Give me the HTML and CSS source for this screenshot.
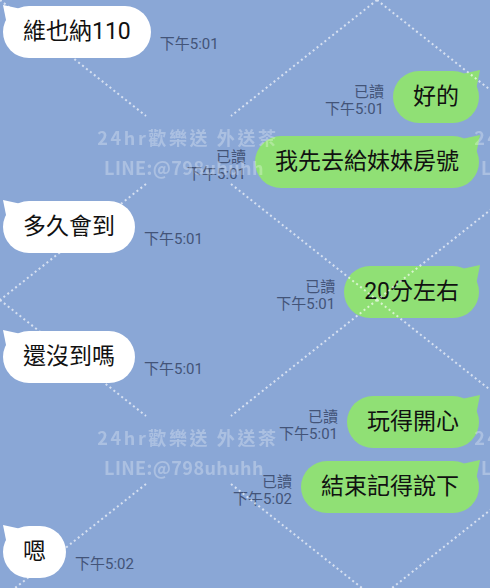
FILE: index.html
```html
<!DOCTYPE html>
<html lang="zh-Hant">
  <head>
    <meta charset="UTF-8" />
    <meta name="viewport" content="width=device-width, initial-scale=1.0" />
    <title>聊天</title>
    <link rel="stylesheet" href="styles.css">
  </head>
  <body>
    <div class="chat">
      <div class="row them">
        <div class="bubble">維也納110</div>
        <div class="meta"><span>下午5:01</span></div>
      </div>
      <div class="row me">
        <div class="meta"><span>已讀</span><span>下午5:01</span></div>
        <div class="bubble">好的</div>
      </div>
      <div class="row me">
        <div class="meta"><span>已讀</span><span>下午5:01</span></div>
        <div class="bubble">我先去給妹妹房號</div>
      </div>
      <div class="row them">
        <div class="bubble">多久會到</div>
        <div class="meta"><span>下午5:01</span></div>
      </div>
      <div class="row me">
        <div class="meta"><span>已讀</span><span>下午5:01</span></div>
        <div class="bubble">20分左右</div>
      </div>
      <div class="row them">
        <div class="bubble">還沒到嗎</div>
        <div class="meta"><span>下午5:01</span></div>
      </div>
      <div class="row me">
        <div class="meta"><span>已讀</span><span>下午5:01</span></div>
        <div class="bubble">玩得開心</div>
      </div>
      <div class="row me">
        <div class="meta"><span>已讀</span><span>下午5:02</span></div>
        <div class="bubble">結束記得說下</div>
      </div>
      <div class="row them">
        <div class="bubble">嗯</div>
        <div class="meta"><span>下午5:02</span></div>
      </div>
    </div>

    <!-- watermark pattern laid over the whole chat -->
    <svg class="watermark" width="490" height="588">
      <defs>
        <pattern id="wm" width="377" height="300" patternUnits="userSpaceOnUse">
          <line x1="0" y1="0" x2="146" y2="116" />
          <line x1="231" y1="184" x2="377" y2="300" />
          <line x1="377" y1="0" x2="231" y2="116" />
          <line x1="146" y1="184" x2="0" y2="300" />
          <text x="188" y="145">24hr歡樂送 外送茶</text>
          <text class="line-id" x="184" y="175">LINE:@798uhuhh</text>
        </pattern>
      </defs>
      <rect width="490" height="588" fill="url(#wm)" />
    </svg>
  </body>
</html>
```

FILE: styles.css
```css
body {
  margin: 0;
  height: 588px;
  overflow: hidden;
  position: relative;
  background: #8aa7d6;
  font-family: Roboto, "Noto Sans CJK TC", sans-serif;
}
.chat {
  display: flex;
  flex-direction: column;
  gap: 13px;
  padding: 6px 11px 0 3px;
}
.row {
  display: flex;
  align-items: flex-end;
}
.row.me {
  justify-content: flex-end;
}
.bubble {
  position: relative;
  height: 52px;
  line-height: 52px;
  padding: 0 20px;
  border-radius: 26px;
  font-size: 23px;
  color: #111;
  background: #fff;
  white-space: nowrap;
}
.me .bubble {
  background: #90e075;
}
.bubble::before {
  content: "";
  position: absolute;
  top: -1px;
  left: 0;
  width: 16px;
  height: 20px;
  background: inherit;
  clip-path: polygon(0 0, 100% 18%, 100% 100%, 25% 100%);
}
.me .bubble::before {
  left: auto;
  right: -1px;
  clip-path: polygon(100% 0, 0 18%, 0 100%, 75% 100%);
}
.meta {
  display: flex;
  flex-direction: column;
  margin: 0 9px 5px;
  font-size: 15px;
  line-height: 17px;
  color: #435478;
  white-space: nowrap;
}
.me .meta {
  align-items: flex-end;
}
.watermark {
  position: absolute;
  top: 0;
  left: 0;
  pointer-events: none;
}
.watermark line {
  stroke: rgba(255, 255, 255, 0.65);
  stroke-width: 2;
  stroke-dasharray: 2 3;
}
.watermark text {
  fill: rgba(255, 255, 255, 0.28);
  font-family: "Noto Sans CJK TC", sans-serif;
  font-weight: bold;
  font-size: 18px;
  letter-spacing: 2.6px;
  text-anchor: middle;
}
.watermark .line-id {
  letter-spacing: 0.4px;
}
```
